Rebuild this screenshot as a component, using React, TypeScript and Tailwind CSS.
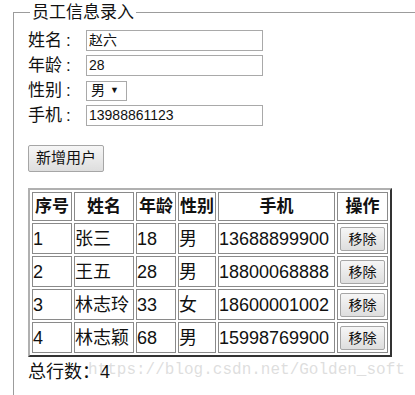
import React from "react";

const rows = [
  { id: 1, name: "张三", age: 18, sex: "男", phone: "13688899900" },
  { id: 2, name: "王五", age: 28, sex: "男", phone: "18800068888" },
  { id: 3, name: "林志玲", age: 33, sex: "女", phone: "18600001002" },
  { id: 4, name: "林志颖", age: 68, sex: "男", phone: "15998769900" },
];

const font = { fontFamily: '"Liberation Sans", "Noto Sans CJK SC", sans-serif' };

function Field({ label, children }: { label: string; children: React.ReactNode }) {
  return (
    <div className="flex h-[25px] items-center">
      <span className="w-[58px] whitespace-nowrap text-[17px] leading-none text-[#111]">
        {label}
        <span className="ml-[4px]">:</span>
      </span>
      {children}
    </div>
  );
}

const inputCls = "h-[21px] w-[177px] border border-[#a9a9a9] px-[2px] text-[14px] text-[#111] outline-none";
const cellCls = "whitespace-nowrap border border-[#8a8a8a] p-0 text-[18px] leading-none text-[#111]";
const headCls = "whitespace-nowrap border border-[#8a8a8a] p-0 text-center text-[17px] font-bold leading-none text-[#111]";

export default function App() {
  return (
    <div className="relative h-[395px] w-[415px] overflow-hidden bg-white" style={font}>
      <fieldset className="ml-[13px] mt-[3px] w-[420px] border border-[#9c9c9c] pb-[30px] pl-[14px] pt-0">
        <legend className="ml-[2px] px-[2px] text-[17px] leading-[19px] text-[#111]">员工信息录入</legend>
        <div className="mt-[6px] flex flex-col">
          <Field label="姓名">
            <input className={inputCls} defaultValue="赵六" />
          </Field>
          <Field label="年龄">
            <input className={inputCls} defaultValue="28" />
          </Field>
          <Field label="性别">
            <div className="flex h-[20px] w-[41px] items-center border border-[#a9a9a9] pl-[4px] text-[14px] text-[#111]">
              男<span className="ml-[5px] text-[9px]">▼</span>
            </div>
          </Field>
          <Field label="手机">
            <input className={inputCls} defaultValue="13988861123" />
          </Field>
        </div>
        <button
          type="button"
          className="mt-[17px] h-[27px] w-[76px] rounded-[2px] border border-[#a6a6a6] bg-gradient-to-b from-[#f6f6f6] to-[#dedede] text-[15px] text-[#111]"
        >
          新增用户
        </button>
        <table
          className="mt-[16px] border-separate border-2 border-t-[#b0b0b0] border-l-[#b0b0b0] border-r-[#333] border-b-[#333]"
          style={{ borderSpacing: "2px" }}
        >
          <thead>
            <tr className="h-[29px]">
              <th className={`${headCls} w-[40px]`}>序号</th>
              <th className={`${headCls} w-[60px]`}>姓名</th>
              <th className={`${headCls} w-[40px]`}>年龄</th>
              <th className={`${headCls} w-[38px]`}>性别</th>
              <th className={`${headCls} w-[117px]`}>手机</th>
              <th className={`${headCls} w-[51px]`}>操作</th>
            </tr>
          </thead>
          <tbody>
            {rows.map((r) => (
              <tr key={r.id} className="h-[31px]">
                <td className={cellCls}>{r.id}</td>
                <td className={cellCls}>{r.name}</td>
                <td className={cellCls}>{r.age}</td>
                <td className={cellCls}>{r.sex}</td>
                <td className={`${cellCls} text-[18.5px]`}>{r.phone}</td>
                <td className={`${cellCls} text-center`}>
                  <button
                    type="button"
                    className="h-[24px] w-[45px] rounded-[2px] border border-[#a6a6a6] bg-gradient-to-b from-[#f6f6f6] to-[#dedede] text-[14px] text-[#111]"
                  >
                    移除
                  </button>
                </td>
              </tr>
            ))}
          </tbody>
        </table>
        <div className="mt-[3px] text-[18px] leading-[24px] text-[#111]">总行数：4</div>
      </fieldset>
      <div
        className="pointer-events-none absolute left-[88px] top-[362px] text-[16px] leading-none text-[#d0d0d0]/70"
        style={{ fontFamily: '"Liberation Mono", monospace' }}
      >
        https://blog.csdn.net/Golden_soft
      </div>
    </div>
  );
}
